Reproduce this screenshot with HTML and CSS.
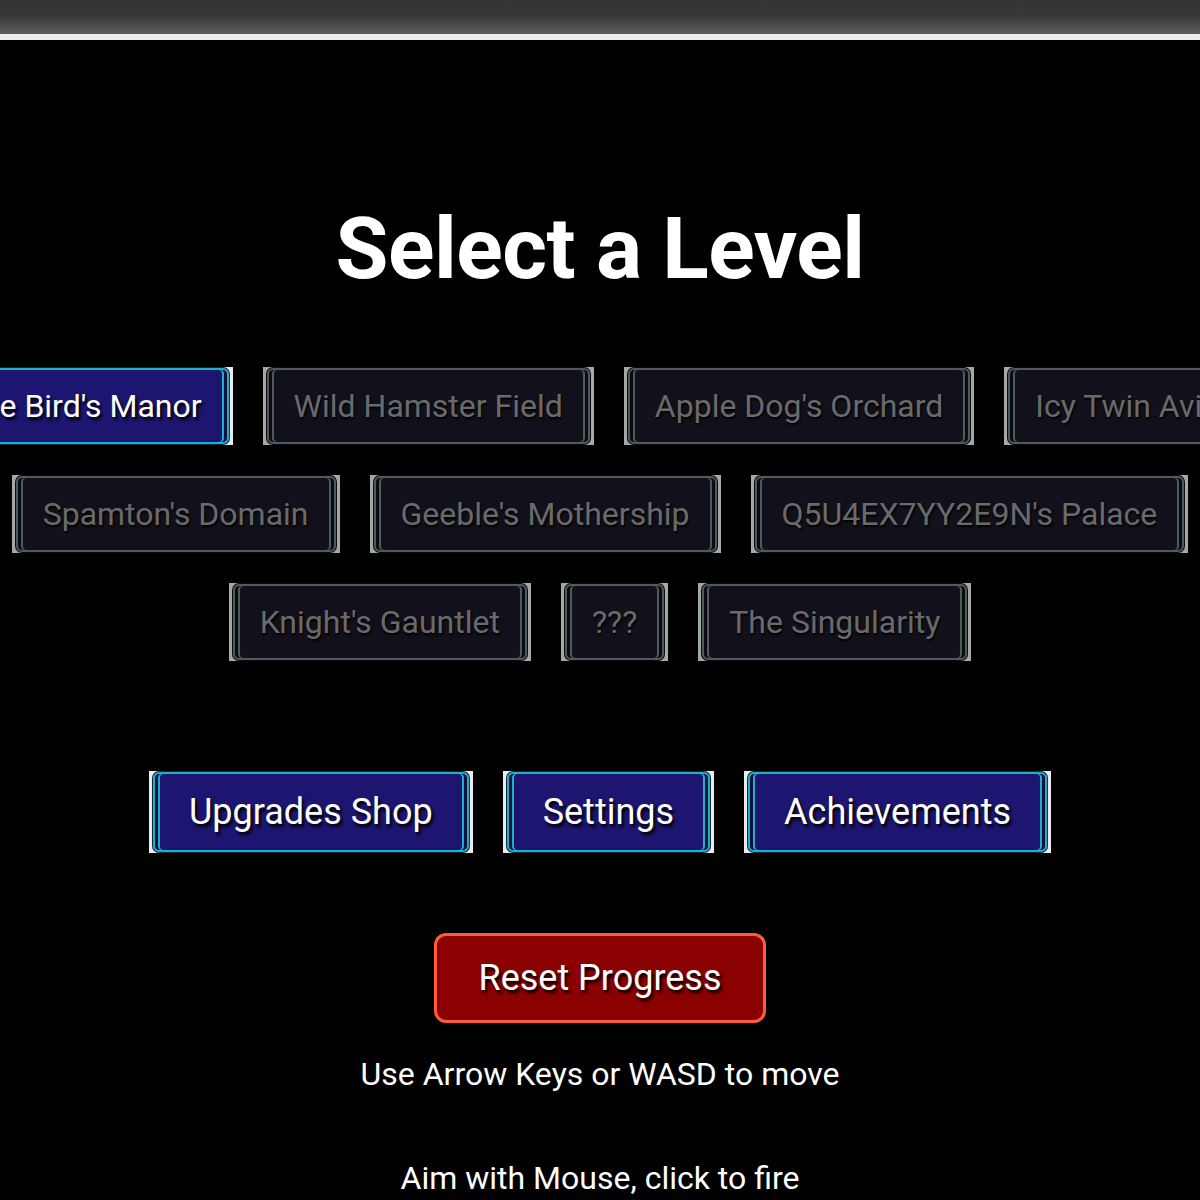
FILE: index.html
```html
<!DOCTYPE html>
<html lang="en">
<head>
    <meta charset="UTF-8">
    <meta name="viewport" content="width=device-width, initial-scale=1.0">
    <title>Select a Level</title>
    <link rel="stylesheet" href="styles.css">
</head>
<body>

<div class="topbar"></div>

<div class="menu">
    <h1 class="title">Select a Level</h1>

    <div class="levels">
        <div class="row">
            <button class="lvl open"><span>Blue Bird's Manor</span></button>
            <button class="lvl"><span>Wild Hamster Field</span></button>
            <button class="lvl"><span>Apple Dog's Orchard</span></button>
            <button class="lvl"><span>Icy Twin Aviary</span></button>
        </div>
        <div class="row">
            <button class="lvl"><span>Spamton's Domain</span></button>
            <button class="lvl"><span>Geeble's Mothership</span></button>
            <button class="lvl"><span>Q5U4EX7YY2E9N's Palace</span></button>
        </div>
        <div class="row">
            <button class="lvl"><span>Knight's Gauntlet</span></button>
            <button class="lvl"><span>???</span></button>
            <button class="lvl"><span>The Singularity</span></button>
        </div>
    </div>

    <div class="row extras">
        <button class="lvl open big"><span>Upgrades Shop</span></button>
        <button class="lvl open big"><span>Settings</span></button>
        <button class="lvl open big"><span>Achievements</span></button>
    </div>

    <button class="reset">Reset Progress</button>

    <p class="hint">Use Arrow Keys or WASD to move</p>
    <p class="hint">Aim with Mouse, click to fire</p>
</div>

</body>
</html>
```

FILE: styles.css
```css
body {
    margin: 0;
    background-color: #000;
    font-family: Roboto, "Liberation Sans", sans-serif;
    color: #fff;
    overflow: hidden;
}
.topbar {
    height: 34px;
    background: linear-gradient(#333 0%, #383838 45%, #5c5c5c 100%);
    border-bottom: 6px solid #ececec;
}
.menu {
    display: flex;
    flex-direction: column;
    align-items: center;
}
.title {
    font-size: 86px;
    font-weight: 700;
    margin: 166px 0 75px;
    line-height: 1;
    letter-spacing: -0.5px;
}
.levels {
    display: flex;
    flex-direction: column;
    gap: 30px;
    width: 100%;
}
.row {
    display: flex;
    justify-content: center;
    gap: 30px;
}
/* framed buttons: light outer plate, rounded inner frame */
.lvl {
    padding: 1px 4px;
    border: none;
    background-color: #a6a8a8;
    font-family: inherit;
    cursor: pointer;
    flex-shrink: 0;
}
.lvl span {
    display: block;
    height: 72px;
    line-height: 72px;
    padding: 0 25px;
    font-size: 32px;
    color: #6a6a6a;
    white-space: nowrap;
    background-color: #12111b;
    border: 2px solid #4c5c5c;
    border-radius: 6px;
    box-shadow: inset 3px 0 0 #0b0b0f, inset -3px 0 0 #0b0b0f,
                inset 5px 0 0 #4c5c5c, inset -5px 0 0 #4c5c5c,
                0 0 0 1px #0b0b0f;
    text-shadow: 1px 2px 2px #000;
}
.lvl.open {
    background-color: #ececec;
}
.lvl.open span {
    color: #fff;
    background-color: #1c1670;
    border-color: #1fb0c8;
    box-shadow: inset 3px 0 0 #101040, inset -3px 0 0 #101040,
                inset 5px 0 0 #1fb0c8, inset -5px 0 0 #1fb0c8,
                0 0 0 1px #0b2a3a;
    text-shadow: 2px 3px 3px #000;
}
.extras {
    margin-top: 110px;
}
.lvl.big span {
    height: 76px;
    line-height: 76px;
    padding: 0 34px;
    font-size: 36px;
}
.reset {
    margin-top: 80px;
    width: 332px;
    height: 90px;
    background-color: #8b0000;
    border: 3px solid #ff5a3c;
    border-radius: 12px;
    color: #fff;
    font-family: inherit;
    font-size: 36px;
    text-shadow: 2px 3px 3px #000;
    cursor: pointer;
}
.hint {
    font-size: 32px;
    margin: 32px 0 0;
    line-height: 38px;
}
.hint + .hint {
    margin-top: 66px;
}
```
